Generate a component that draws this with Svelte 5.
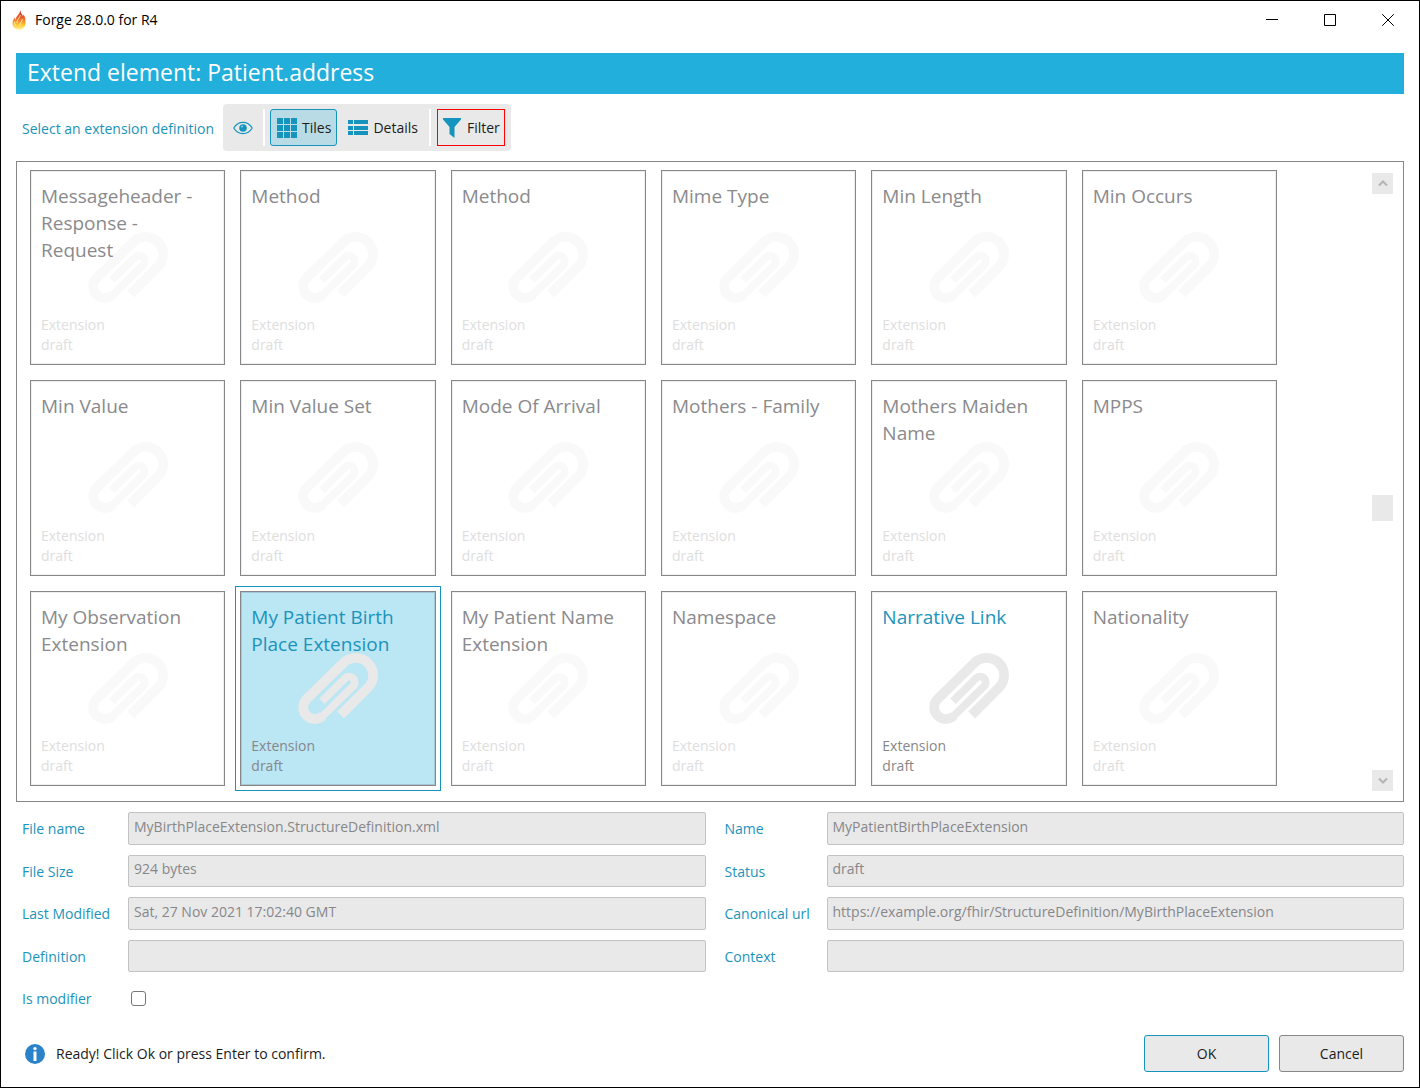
<script>
  const tiles = [
    { title: 'Messageheader - Response - Request' },
    { title: 'Method' },
    { title: 'Method' },
    { title: 'Mime Type' },
    { title: 'Min Length' },
    { title: 'Min Occurs' },
    { title: 'Min Value' },
    { title: 'Min Value Set' },
    { title: 'Mode Of Arrival' },
    { title: 'Mothers - Family' },
    { title: 'Mothers Maiden Name' },
    { title: 'MPPS' },
    { title: 'My Observation Extension' },
    { title: 'My Patient Birth Place Extension', enabled: true },
    { title: 'My Patient Name Extension' },
    { title: 'Namespace' },
    { title: 'Narrative Link', enabled: true },
    { title: 'Nationality' }
  ];
  let selected = $state(13);
  let view = $state('tiles');

  const fields = [
    { id: 'file-name', label: 'File name', value: 'MyBirthPlaceExtension.StructureDefinition.xml' },
    { id: 'name', label: 'Name', value: 'MyPatientBirthPlaceExtension', second: true },
    { id: 'file-size', label: 'File Size', value: '924 bytes' },
    { id: 'status', label: 'Status', value: 'draft', second: true },
    { id: 'modified', label: 'Last Modified', value: 'Sat, 27 Nov 2021 17:02:40 GMT' },
    { id: 'url', label: 'Canonical url', value: 'https://example.org/fhir/StructureDefinition/MyBirthPlaceExtension', second: true },
    { id: 'definition', label: 'Definition', value: '' },
    { id: 'context', label: 'Context', value: '', second: true }
  ];
</script>

<div class="window">
  <header class="titlebar">
    <svg class="flame" viewBox="0 0 14 20" aria-hidden="true">
      <defs>
        <linearGradient id="fire" x1="0" y1="0" x2="0" y2="1">
          <stop offset="0" stop-color="#d8231f" />
          <stop offset="0.45" stop-color="#ee6a30" />
          <stop offset="0.75" stop-color="#fcc830" />
          <stop offset="1" stop-color="#fff3a0" />
        </linearGradient>
      </defs>
      <path fill="url(#fire)" d="M8.4 0c.2 3 1.500 4.200 2.600 6 .5-.5.6-1 .6-1.700C13 7 13.800 9.500 13.600 13c-.2 4-2.900 6.700-6.400 6.700C3.200 19.700.6 17 .5 13.600c-.1-2.600 1-4.300 2.500-6-.1 1.300 0 2 .4 2.600C3.700 6.200 8 4.400 8.400 0z" />
      <path fill="none" stroke="#fff0a8" stroke-width=".9" d="M8.300 5c-.5 3-3.300 4.200-3.500 8M10.300 9c.2 2.500-2.400 3.500-2.500 6.500M2.500 11.500c0 2 .4 3 1.500 4.500" />
    </svg>
    <span class="app-name">Forge 28.0.0 for R4</span>
    <div class="captions">
      <button aria-label="Minimize"><svg viewBox="0 0 12 12"><path d="M0 5.500h12" /></svg></button>
      <button aria-label="Maximize"><svg viewBox="0 0 12 12"><path d="M.5.5h11v11H.5z" /></svg></button>
      <button aria-label="Close"><svg viewBox="0 0 12 12"><path d="M.2.2l11.600 11.600M11.800.2L.2 11.800" /></svg></button>
    </div>
  </header>

  <main>
    <h1>Extend element: Patient.address</h1>

    <div class="select-row">
      <span class="prompt">Select an extension definition</span>
      <div class="toolbar" role="toolbar" aria-label="View">
        <button class="tool eye" aria-label="Preview">
          <svg viewBox="0 0 20 14" width="20" height="14">
            <path d="M.8 7C3 3.300 6.200 1.300 10 1.300S17 3.300 19.200 7C17 10.700 13.800 12.700 10 12.700S3 10.700.8 7z" fill="none" stroke="#1595be" stroke-width="1.200" />
            <circle cx="10" cy="7" r="3.800" fill="#1595be" />
            <circle cx="9" cy="5.600" r="1" fill="#8fd0e4" />
          </svg>
        </button>
        <span class="divider"></span>
        <button class="tool" class:on={view === 'tiles'} onclick={() => (view = 'tiles')}>
          <svg viewBox="0 0 20 20" width="20" height="20" fill="#1595be">
            {#each [0, 7, 14] as y}
              {#each [0, 7, 14] as x}
                <rect {x} {y} width="6" height="6" />
              {/each}
            {/each}
          </svg>
          Tiles
        </button>
        <button class="tool details" class:on={view === 'details'} onclick={() => (view = 'details')}>
          <svg viewBox="0 0 20 16" width="20" height="16" fill="#1595be">
            {#each [0, 6, 11] as y}
              <rect x="0" {y} width="5" height="4" />
              <rect x="6" {y} width="14" height="4" />
            {/each}
          </svg>
          Details
        </button>
        <span class="divider"></span>
        <button class="tool filter">
          <svg viewBox="0 0 18 20" width="18" height="20" fill="#1595be"><path d="M0 0h18v1.500L11.500 9v11L6.500 16V9L0 1.500z" /></svg>
          Filter
        </button>
      </div>
    </div>

    <section class="list">
      <div class="tiles">
        {#each tiles as tile, i}
          <button class="tile" class:enabled={tile.enabled} class:selected={i === selected} onclick={() => tile.enabled && (selected = i)}>
            <svg class="clip" viewBox="27 24 240 213" aria-hidden="true">
              <path class="outer" d="M155 210L237 128A52 52 0 0 0 163 54L53 162A35 35 0 0 0 102 212" />
              <path class="inner" d="M101 213L193 123A17 17 0 0 0 169 99L99 169" />
            </svg>
            <span class="text">
              <span class="title">{tile.title}</span>
              <span class="meta">Extension<br />draft</span>
            </span>
          </button>
        {/each}
      </div>
      <div class="scroll">
        <button aria-label="Scroll up"><svg viewBox="0 0 10 7"><path d="M1 5.500l4-4 4 4" /></svg></button>
        <span class="before"></span>
        <span class="thumb"></span>
        <span class="after"></span>
        <button aria-label="Scroll down"><svg viewBox="0 0 10 7"><path d="M1 1.500l4 4 4-4" /></svg></button>
      </div>
    </section>

    <form class="props">
      {#each fields as f}
        <label for={f.id} class:second={f.second}>{f.label}</label>
        <input id={f.id} type="text" value={f.value} readonly />
      {/each}
    </form>
    <div class="modifier">
      <label for="is-modifier">Is modifier</label>
      <input id="is-modifier" type="checkbox" />
    </div>

    <footer>
      <svg viewBox="0 0 20 20" width="20" height="20" aria-hidden="true">
        <circle cx="10" cy="10" r="10" fill="#2a82c9" />
        <circle cx="10" cy="4.600" r="1.700" fill="#fff" />
        <path d="M8.500 7.500h3V17h-3z" fill="#fff" />
      </svg>
      <span class="status">Ready! Click Ok or press Enter to confirm.</span>
      <button class="ok">OK</button>
      <button>Cancel</button>
    </footer>
  </main>
</div>

<style>
  :global(body) {
    margin: 0;
    background: #fff;
  }
  .window,
  .window :is(button, input) {
    font-family: 'Segoe UI', 'Open Sans', 'Noto Sans', sans-serif;
    font-size: 14px;
    line-height: 20px;
  }
  .window {
    box-sizing: border-box;
    min-height: 100vh;
    display: flex;
    flex-direction: column;
    border: 1px solid #000;
    color: #1c1c1c;
  }
  button {
    margin: 0;
    padding: 0;
    color: inherit;
    background: none;
    border: 0;
  }
  .titlebar {
    display: flex;
    align-items: center;
    height: 37px;
    padding: 0 2px 0 11px;
    color: #000;
  }
  .flame {
    width: 14px;
    height: 20px;
    margin-right: 9px;
  }
  .app-name {
    flex: 1;
  }
  .captions {
    display: flex;
    align-self: stretch;
  }
  .captions button {
    display: grid;
    place-items: center;
    width: 58px;
  }
  .captions svg {
    width: 12px;
    height: 12px;
    fill: none;
    stroke: #000;
  }
  main {
    flex: 1;
    display: flex;
    flex-direction: column;
    padding: 15px;
  }
  h1 {
    margin: 0;
    padding: 0 11px 2px;
    font-size: 23px;
    font-weight: 400;
    line-height: 39px;
    color: #fff;
    background: #23afdb;
  }
  .select-row {
    display: flex;
    align-items: center;
    margin: 10px 0;
    padding-left: 6px;
    gap: 9px;
  }
  .prompt,
  label {
    padding-top: 2px;
    color: #1b93bb;
  }
  .toolbar {
    display: flex;
    padding: 5px 6px 5px 5px;
    border-radius: 4px;
    background: #e9e9e9;
  }
  .tool {
    box-sizing: border-box;
    display: flex;
    align-items: center;
    gap: 5px;
    height: 37px;
    padding: 0 5px 0 6px;
    border: 1px solid transparent;
    border-radius: 3px;
  }
  .tool.eye {
    padding: 0 4px;
    margin-right: 5px;
  }
  .tool.on {
    border-color: #1595be;
    background: #b9dbe5;
  }
  .details {
    margin: 0 5px 0 4px;
  }
  .divider {
    width: 2px;
    margin-right: 5px;
    background: #fff;
  }
  .tool.filter {
    gap: 6px;
    padding: 0 4px 0 5px;
    margin-left: 1px;
    border-color: #f00;
    border-radius: 0;
  }
  .list {
    flex: 1;
    display: flex;
    border: 1px solid #87878a;
  }
  .tiles {
    flex: 1;
    display: grid;
    grid-template-columns: repeat(6, 1fr);
    grid-auto-rows: 1fr;
    gap: 15px;
    padding: 8px 95px 15px 13px;
  }
  .tile {
    display: grid;
    min-height: 190px;
    border: 1px solid #87878a;
    background: #fff;
    text-align: left;
    box-shadow: inset 0 0 0 1px #eee;
  }
  .clip,
  .text {
    grid-area: 1 / 1;
  }
  .clip {
    width: 80px;
    height: 71px;
    place-self: center;
    fill: none;
    stroke: #f9f9f9;
  }
  .outer {
    stroke-width: 29;
  }
  .inner {
    stroke-width: 23;
  }
  .text {
    display: flex;
    flex-direction: column;
    justify-content: space-between;
    padding: 12px 10px 9px;
  }
  .title {
    font-size: 19px;
    line-height: 27px;
    color: #8a8a8d;
  }
  .meta {
    color: #dedede;
  }
  .enabled .clip {
    stroke: #e9e9e9;
  }
  .enabled .title {
    color: #1b93bb;
  }
  .enabled .meta {
    color: #87878a;
  }
  .selected {
    background: #bbe6f4;
    box-shadow: inset 0 0 0 1px #a5c8d4;
    outline: 1px solid #1595be;
    outline-offset: 4px;
  }
  .scroll {
    display: flex;
    flex-direction: column;
    width: 21px;
    padding: 11px 10px 10px 0;
  }
  .scroll button {
    display: grid;
    place-items: center;
    height: 21px;
    background: #e9e9e9;
  }
  .scroll svg {
    width: 10px;
    height: 7px;
    fill: none;
    stroke: #b4b4b4;
    stroke-width: 2;
  }
  .thumb {
    height: 26px;
    background: #e9e9e9;
  }
  .before {
    flex: 301;
  }
  .after {
    flex: 249;
  }
  .props {
    display: grid;
    grid-template-columns: 112px 1fr 121px 1fr;
    grid-auto-rows: 1fr;
    align-items: center;
    row-gap: 10px;
    min-height: 160px;
    margin-top: 10px;
  }
  label {
    padding-left: 6px;
  }
  label.second {
    padding-left: 19px;
  }
  .props input {
    box-sizing: border-box;
    width: 100%;
    height: 100%;
    padding: 0 5px 4px;
    border: 1px solid #c3c3c3;
    border-radius: 2px;
    color: #87878a;
    background: #e9e9e9;
  }
  .modifier {
    display: grid;
    grid-template-columns: 115px 1fr;
    align-items: center;
    margin-top: 15px;
  }
  .modifier input {
    appearance: none;
    box-sizing: border-box;
    width: 15px;
    height: 15px;
    margin: 0;
    border: 1px solid #77777a;
    border-radius: 3px;
    background: #fff;
  }
  footer {
    display: flex;
    align-items: center;
    gap: 10px;
    margin-top: 26px;
    padding-left: 9px;
  }
  .status {
    flex: 1;
    padding-left: 1px;
  }
  footer button {
    width: 125px;
    height: 37px;
    border: 1px solid #87878a;
    border-radius: 3px;
    background: #e9e9e9;
  }
  footer .ok {
    border-color: #1595be;
  }
</style>
